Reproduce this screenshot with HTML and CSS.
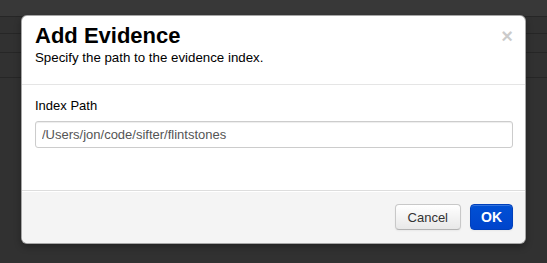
FILE: index.html
```html
<!DOCTYPE html>
<html lang="en">
<head>
    <meta charset="UTF-8">
    <title>Add Evidence</title>
    <link rel="stylesheet" href="styles.css">
</head>
<body>
    <div class="modal">
        <div class="modal-header">
            <button type="button" class="close">&times;</button>
            <h3>Add Evidence</h3>
            <p>Specify the path to the evidence index.</p>
        </div>
        <div class="modal-body">
            <label for="indexPath">Index Path</label>
            <input type="text" id="indexPath" value="/Users/jon/code/sifter/flintstones">
        </div>
        <div class="modal-footer">
            <button type="button" class="btn">Cancel</button>
            <button type="button" class="btn btn-primary">OK</button>
        </div>
    </div>
</body>
</html>
```

FILE: styles.css
```css
* {
    margin: 0;
    padding: 0;
    box-sizing: border-box;
}
body{
    background-color: #313131;
    background-image:
        linear-gradient(#383838, #383838),
        linear-gradient(#262626, #262626),
        linear-gradient(#262626, #262626),
        linear-gradient(#262626, #262626),
        linear-gradient(#262626, #262626);
    background-repeat: no-repeat;
    background-size: 100% 16px, 100% 1px, 100% 1px, 100% 1px, 100% 1px;
    background-position: 0 0, 0 16px, 0 33px, 0 52px, 0 77px;
    font-family: "Liberation Sans", Arial, sans-serif;
    font-size: 13px;
    color: #000;
    padding: 15px 0 0 21px;
    height: 263px;
    overflow: hidden;
}
.modal{
    width: 505px;
    background: #fff;
    border: 1px solid rgba(0,0,0,0.35);
    border-radius: 6px;
    box-shadow: 0 3px 7px rgba(0,0,0,0.3);
}
.modal-header{
    position: relative;
    padding: 7px 13px 17px;
    border-bottom: 1px solid #e5e5e5;
}
.modal-header h3{
    font-size: 22px;
    line-height: 26px;
    font-weight: bold;
}
.modal-header p{
    font-size: 13.3px;
    line-height: 18px;
}
.close{
    position: absolute;
    top: 10px;
    right: 12px;
    border: 0;
    background: none;
    font-family: "Liberation Sans", Arial, sans-serif;
    font-size: 20px;
    font-weight: bold;
    line-height: 20px;
    color: #000;
    opacity: 0.2;
}
.modal-body{
    padding: 12px 12px 42px 13px;
}
.modal-body label{
    display: block;
    line-height: 18px;
    margin-bottom: 6px;
}
.modal-body input{
    display: block;
    width: 100%;
    height: 27px;
    padding: 0 6px;
    border: 1px solid #ccc;
    border-radius: 3px;
    box-shadow: inset 0 1px 1px rgba(0,0,0,0.075);
    font-family: "Liberation Sans", Arial, sans-serif;
    font-size: 13px;
    color: #555;
}
.modal-footer{
    display: flex;
    justify-content: flex-end;
    gap: 9px;
    padding: 13px 12px 13px;
    background: #f4f4f4;
    border-top: 1px solid #ddd;
    border-radius: 0 0 6px 6px;
    box-shadow: inset 0 1px 0 #fff;
}
.btn{
    height: 26px;
    padding: 0 12px;
    font-family: "Liberation Sans", Arial, sans-serif;
    font-size: 13px;
    color: #333;
    background: linear-gradient(#fff, #e8e8e8);
    border: 1px solid #c8c8c8;
    border-bottom-color: #b3b3b3;
    border-radius: 4px;
    box-shadow: inset 0 1px 0 rgba(255,255,255,0.2), 0 1px 2px rgba(0,0,0,0.05);
}
.btn-primary{
    width: 43px;
    padding: 0;
    color: #fff;
    font-size: 14px;
    font-weight: bold;
    background: linear-gradient(#0050d4, #0044cc);
    border-color: #0040bb;
}
```
